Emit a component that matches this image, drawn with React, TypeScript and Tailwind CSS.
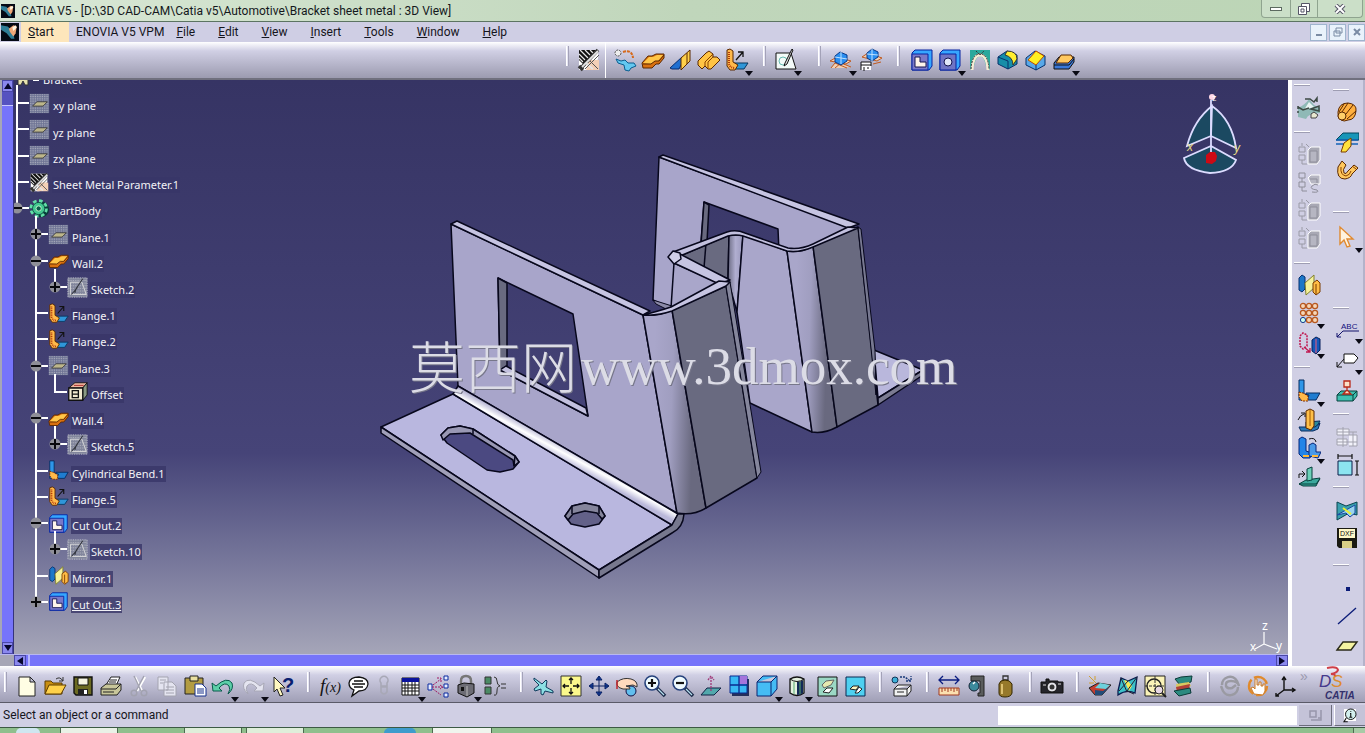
import type { ReactNode } from "react";

const icons: Record<string, ReactNode> = {
  // sheet metal tools
  params: (
    <>
      <path d="M2 2h19v9l-9 11H2z" fill="#fff" />
      <path d="M12 12h10v10H9z" fill="#f3cfb6" />
      <path d="M2 2h17l-9 10-4 4-4-4z" fill="#111" />
      <path d="M2 6l6 6M3 2l8 8M8 2l5 5M13 2l3 3M2 10l4 4" stroke="#e8e8e8" strokeWidth="1.2" />
      <path d="M21 2L4 20M2 18l4 4" stroke="#333" strokeWidth="3.5" />
      <path d="M21 3L5 19M9 15l7 6" stroke="#e4e4e4" strokeWidth="1.8" />
      <path d="M8 21L22 7M13 13l8 8" stroke="#555" />
    </>
  ),
  recognize: (
    <>
      <circle cx="5" cy="5" r="3" fill="#eee" stroke="#555" strokeDasharray="2 1" />
      <path d="M10 4q9-3 10 6" fill="none" stroke="#d66a1c" strokeWidth="2" strokeDasharray="3 1" />
      <path d="M3 11l5 2 4-1 3 3h6l2 3-5 2-2 3-4-1-1-5-6-2z" fill="#63c8f0" stroke="#0a5d90" />
    </>
  ),
  wall: (
    <>
      <path d="M1 15l6-7h4l4-2h8v4l-5 6h-3l-4 4H2z" fill="#d87010" stroke="#5b2800" />
      <path d="M2 15l6-6h4l4-2h6l-5 6h-3l-4 3z" fill="#ffc648" />
      <path d="M2 16h8l4-3h4l5-6" fill="none" stroke="#5b2800" />
    </>
  ),
  wallEdge: (
    <>
      <path d="M1 20L13 9v6l-3 6H3z" fill="#1f6fd0" stroke="#062c70" />
      <path d="M12 10l9-8v11l-9 9z" fill="#ffd04a" stroke="#5b2800" />
      <path d="M18 5v11" stroke="#5b2800" />
    </>
  ),
  extrusion: (
    <>
      <path d="M1 13l8-8 3-2 4 3v3h4l3 3-9 9h-3l-3-3-3 3-4-4z" fill="#ffc444" stroke="#5b2800" />
      <path d="M16 6l-8 8v4M16 9l-5 5v6" fill="none" stroke="#8a4000" />
    </>
  ),
  flange: (
    <>
      <path d="M9 15h14l-4 6H9z" fill="#2f96d8" stroke="#08365f" />
      <path d="M2 2l3-1 3 2v11l5 3-3 5H5l-3-4z" fill="#ffb94a" stroke="#5b2800" />
      <path d="M4 4v12q1 4 6 4" fill="none" stroke="#b0380c" strokeDasharray="1 1" strokeWidth="2" />
      <path d="M11 12l7-8M13 4h5v5" fill="none" stroke="#111" strokeWidth="1.3" />
    </>
  ),
  sketch: (
    <>
      <path d="M2 5h15l5 16H2z" fill="#f3faf8" stroke="#111" />
      <circle cx="9" cy="13" r="4" fill="none" stroke="#67bcb2" />
      <path d="M18 1L11 15l-1 3 3-2 6-14z" fill="#ddd" stroke="#111" />
    </>
  ),
  fold: (
    <>
      <path d="M1 13l7-4 14 4-5 3zM2 20l4-5 12 5M6 20l6-5 10 4" fill="#f1d0b4" stroke="#bf5a20" />
      <path d="M6 8l5-4 7 3v6l-6 4-6-3z" fill="#2b8ff0" stroke="#07398b" />
      <path d="M12 4v12M6 9l12 2" stroke="#bfe2ff" />
    </>
  ),
  foldMap: (
    <>
      <path d="M3 9l6-4 14 5-5 3zM14 16l8-2" fill="#f1d0b4" stroke="#bf5a20" />
      <path d="M8 5l5-4 6 3v5l-6 4-5-3z" fill="#2b8ff0" stroke="#07398b" />
      <path d="M13 1v12M8 6l11 1" stroke="#bfe2ff" />
      <path d="M2 14h10v8H2z" fill="#fff" />
      <path d="M2 22v-8h10v4M2 17h10M5 19v4M8 20h2" stroke="#111" />
    </>
  ),
  cutout: (
    <>
      <path d="M2 5l3-3h17v16l-3 4H2z" fill="#36a6ff" stroke="#0622a0" />
      <path d="M2 6h16v16H2z" fill="#7a78c8" stroke="#0622a0" />
      <path d="M5 9h5v5h6v5H5z" fill="#fff4ea" stroke="#141450" />
    </>
  ),
  hole: (
    <>
      <path d="M2 5l3-3h17v16l-3 4H2z" fill="#36a6ff" stroke="#0622a0" />
      <path d="M2 6h16v16H2z" fill="#6f74c4" stroke="#0622a0" />
      <circle cx="10" cy="14" r="4" fill="#dfe6f8" stroke="#141450" />
    </>
  ),
  corner: (
    <>
      <path d="M2 2h20v20l-4-4q-2-10-6-10T6 18l-4 4z" fill="#2aa89c" />
      <path d="M4 22q1-15 8-15t8 15" fill="none" stroke="#f6ecd4" strokeWidth="3" />
      <path d="M3 21q1-15 9-15t9 15M8 3l4 4 4-4" fill="none" stroke="#333" strokeDasharray="2 1" />
    </>
  ),
  cornerRelief: (
    <>
      <path d="M2 9l9-6 10 4v9l-9 5-10-5z" fill="#168ea8" stroke="#07306b" />
      <path d="M11 3q10 0 10 8l-4 6q0-8-8-10z" fill="#ffee30" stroke="#333" />
      <path d="M2 9l10 4v8" stroke="#07306b" />
    </>
  ),
  chamfer: (
    <>
      <path d="M2 10l9-7 10 5v9l-9 5-10-5z" fill="#58a8e8" stroke="#07306b" />
      <path d="M4 12l8-9 8 5-8 9z" fill="#fff020" stroke="#c04a00" />
      <path d="M12 17v5" stroke="#07306b" />
    </>
  ),
  stamp: (
    <>
      <path d="M2 15l5-6h15v5l-5 7H2z" fill="#3a78d8" stroke="#111" />
      <path d="M4 15l5-8h10l2 3-5 5z" fill="#ffc860" stroke="#5b2800" />
      <path d="M2 17h15l5-6" fill="none" stroke="#111" />
    </>
  ),
  // specification tree
  plane: (
    <>
      <path d="M1 1h22v22H1z" fill="#6e7394" />
      <path d="M1 2h22M1 4h22M1 6h22M1 8h22M1 10h22M1 12h22M1 14h22M1 16h22M1 18h22M1 20h22M1 22h22" stroke="#b5b8c4" strokeDasharray="1 1" />
      <path d="M4 15l5-5h12l-5 5z" fill="#bcb68a" stroke="#34343c" />
    </>
  ),
  treeSketch: (
    <>
      <path d="M1 1h22v22H1z" fill="#82869c" stroke="#d0d2da" strokeDasharray="1 1" />
      <path d="M1 4h22M1 7h22M1 10h22M1 13h22M1 16h22M1 19h22" stroke="#b9bcc6" strokeDasharray="1 1" />
      <path d="M4 6h13l5 14H4z" fill="none" stroke="#ddd" />
      <path d="M18 2l-8 12-1 4M5 20l7-8" stroke="#33363f" strokeWidth="1.3" />
    </>
  ),
  gear: (
    <>
      <circle cx="14" cy="13" r="9" fill="#083f3c" />
      <circle cx="11" cy="12" r="8.5" fill="none" stroke="#63dfa8" strokeWidth="4" strokeDasharray="4 2.7" />
      <circle cx="11" cy="12" r="7" fill="#42c890" stroke="#0a4d40" />
      <circle cx="11" cy="12" r="3" fill="#0e5b4c" stroke="#c8ffd0" />
    </>
  ),
  offset: (
    <>
      <path d="M2 8l7-6h14l-5 6z" fill="#f0b8a0" stroke="#111" />
      <path d="M18 8l5-6v14l-5 6z" fill="#8a9a84" stroke="#111" />
      <path d="M2 8h16v14H2z" fill="#f2ead0" stroke="#111" strokeWidth="1.5" />
      <path d="M6 11h7v8H6zM6 15h7" fill="none" stroke="#111" strokeWidth="1.5" />
      <path d="M8 5h11" stroke="#a02020" />
    </>
  ),
  bend: (
    <>
      <path d="M9 14h14l-4 7H9z" fill="#1f7cd0" stroke="#062c60" />
      <path d="M2 1h5v14l5 1-2 5H2z" fill="#2f96e8" stroke="#062c60" />
      <path d="M2 13l4 1 5 3v5H5l-3-4z" fill="#ffb94a" stroke="#7a2800" strokeDasharray="2 1" />
    </>
  ),
  mirror: (
    <>
      <path d="M2 5l3-3 3 2v12l-3 3-3-2z" fill="#1c78c8" stroke="#063070" />
      <path d="M8 10l9-8v13l-8 7z" fill="#f6f29a" stroke="#80802c" />
      <path d="M16 10l4-3 3 3v9l-4 3-3-3zM19 11v10" fill="#ffbd45" stroke="#7a3c00" />
    </>
  ),
  // right columns
  workbench: (
    <>
      <path d="M1 12q7-3 11-9l5 6 6 3v5q-12 0-14 6l-8-2z" fill="#8fb9b6" />
      <path d="M12 6l5 5-10 3z" fill="#e8f4f2" />
      <path d="M1 11l5 3 6-2M14 13l8-3v5zM8 3h5l4 3 3-4v4M1 13v-3M1 15v2" fill="none" stroke="#3d4a44" strokeWidth="1.5" />
      <path d="M14 18l3-2 4 3-2 3h-5z" fill="#e8e8d0" stroke="#444" />
    </>
  ),
  ghost: (
    <>
      <path d="M11 8l3-3h9v13l-3 4h-9z" fill="#a8a8b4" stroke="#fff" />
      <path d="M2 5h6v5H2zM2 13h6v5H2zM5 1v3M5 18v4h5M9 2l3 3" fill="none" stroke="#9a9aa6" />
      <path d="M13 9h7v11h-7z" fill="#b6b6c2" stroke="#8e8e9a" />
    </>
  ),
  ghostLoop: (
    <>
      <path d="M11 8l3-3h9v9h-9z" fill="#b6b6c2" stroke="#fff" />
      <path d="M2 3h6v5H2zM2 12h6v5H2zM5 8v4M5 17v4h5M13 9h7v4M21 15q-3-2-6 1t5 4q3 3-5 2" fill="none" stroke="#8e8e9a" />
    </>
  ),
  rolled: (
    <>
      <path d="M3 12q1-9 10-9 9 1 8 8-1 9-8 9-4 2-7 0-4-3-3-8z" fill="#ffb040" stroke="#5b2800" />
      <circle cx="7" cy="16" r="4" fill="#ffcf6a" stroke="#5b2800" />
      <path d="M7 12L13 3M11 14l7-9M4 12l5-8M12 19l9-8" stroke="#5b2800" />
    </>
  ),
  hopper: (
    <>
      <path d="M8 3h16v7H13L1 10z" fill="#1796b8" stroke="#05455c" />
      <path d="M1 10h22M1 14h22" stroke="#1464b8" strokeWidth="1.6" />
      <path d="M9 13l7-5v8l-5 6H6z" fill="#ffe23c" stroke="#7a3c00" />
    </>
  ),
  swept: (
    <>
      <path d="M3 9q-2 12 7 12 6-1 7-5l6-6-4-3-6 6q-2 4-4 2-2-3 2-8L7 3z" fill="#ffc85e" stroke="#5b2800" />
      <path d="M6 9q-1 8 5 9 4-1 5-5M17 8l4 3" stroke="#8a4000" />
    </>
  ),
  select: <path d="M5 2v17l4-4 3 7 3-1-3-7h6z" fill="#fff3df" stroke="#e08a30" strokeWidth="1.4" />,
  pattern: (
    <>
      <g fill="#f5d6b8" stroke="#b85820" strokeWidth="1.3">
        <circle cx="6" cy="5" r="2.6" /><circle cx="12" cy="5" r="2.6" /><circle cx="18" cy="5" r="2.6" />
        <circle cx="6" cy="12" r="2.6" /><circle cx="12" cy="12" r="2.6" /><circle cx="18" cy="12" r="2.6" />
        <circle cx="12" cy="19" r="2.6" /><circle cx="18" cy="19" r="2.6" />
      </g>
      <circle cx="6" cy="19" r="2.6" fill="#cfe" stroke="#14388c" />
    </>
  ),
  translate: (
    <>
      <path d="M3 5l3-3 4 2v11l-4 3-3-3z" fill="none" stroke="#c01850" strokeWidth="1.5" strokeDasharray="2 1" />
      <path d="M7 16l6 5M13 17v4H9" fill="none" stroke="#c01850" strokeWidth="1.3" />
      <path d="M15 9l4-3 4 2v11l-4 4-4-3z" fill="#1458b8" stroke="#07205c" />
      <path d="M19 8v14" stroke="#ef5a7a" />
    </>
  ),
  unfoldBend: (
    <>
      <path d="M9 14l14-1-4 7H9z" fill="#2b8a9c" stroke="#062c60" />
      <path d="M2 19h16l5-4-2 6-5 2H4z" fill="#2b7ab8" stroke="#062c60" />
      <path d="M9 20V3l4-2 4 2v15l-3 4z" fill="#ffc04a" stroke="#5b2800" />
      <path d="M13 2v16" stroke="#a05a00" />
      <path d="M1 12q2-5 6-6M4 5h4v4" fill="none" stroke="#111" />
    </>
  ),
  foldAll: (
    <>
      <path d="M2 3l3-2 4 2v12l6 2-2 5H6l-4-4z" fill="#2384e8" stroke="#06267a" />
      <path d="M12 20V9l4-2 3 2v7h5l-3 6z" fill="#4a9ae8" stroke="#06267a" />
      <path d="M6 20h6M15 20h6" stroke="#ffb838" strokeWidth="2" />
      <path d="M12 3q6-2 7 3" fill="none" stroke="#111" />
    </>
  ),
  pointMap: (
    <>
      <path d="M9 14l14-2-4 8H6l-4-2z" fill="#3ba89c" stroke="#06403c" />
      <path d="M10 15V3l5-2v13z" fill="#6cd0b8" stroke="#06403c" />
      <path d="M2 18h17l4-5" fill="none" stroke="#06403c" />
      <path d="M2 12V8h5M5 5l3 3-3 3" fill="none" stroke="#111" />
    </>
  ),
  annotation: (
    <>
      <text x="6" y="13" fontSize="8" fontFamily="Liberation Sans, sans-serif" fill="#10107c">ABC</text>
      <path d="M24 15H8l-6 6M2 17v4h4" fill="none" stroke="#10106a" />
    </>
  ),
  flag: (
    <>
      <path d="M9 7h10l4 4-4 5H9z" fill="#fff" stroke="#111" />
      <path d="M9 12L2 20M2 15v5h5" fill="none" stroke="#111" />
    </>
  ),
  datum: (
    <>
      <path d="M2 16l4-4h16v5l-4 5H2z" fill="#3fc0b0" stroke="#06403c" />
      <path d="M2 16h16l4-4M18 16v6" fill="none" stroke="#06403c" />
      <path d="M9 2h6v6H9zM12 8v4M8 15l4-4 4 4z" fill="#fbe0c8" stroke="#b82818" strokeWidth="1.3" />
    </>
  ),
  ghostTable: <path d="M2 4h12v6H2zM2 7h20M8 2v20M2 14h10v6H2zM14 10h8v11h-8M18 7v14M2 17h20" fill="#f2f2fa" stroke="#a2a2ae" />,
  dimension: (
    <>
      <path d="M3 8h14v14H3z" fill="#8ce4f0" stroke="#0b1c48" />
      <path d="M3 3h14M3 1v5M17 1v5M22 8v14M20 8h4M20 22h4" stroke="#111" strokeWidth="1.2" />
    </>
  ),
  intersection: (
    <>
      <path d="M2 4l9 4 11-4v13l-8-2-12 7z" fill="#3aa0ae" stroke="#0a4450" />
      <path d="M2 17L20 7v8l-5 4-4-4z" fill="#9ad4ef" stroke="#1848a0" />
      <path d="M8 10l8 6" stroke="#e8f030" strokeWidth="2" />
    </>
  ),
  dxf: (
    <>
      <path d="M2 2h20v20H4l-2-2z" fill="#1a1a12" />
      <path d="M4 3h16v9H4z" fill="#fff8c8" />
      <text x="5" y="10" fontSize="7" fontFamily="Liberation Sans, sans-serif" fill="#111">DXF</text>
      <path d="M7 15h10v7H7z" fill="#d9cf86" />
    </>
  ),
  point: <path d="M11 11h4v4h-4z" fill="#0b1c78" />,
  line: <path d="M3 20L21 4" stroke="#0b1c78" strokeWidth="1.4" />,
  yellowPlane: <path d="M2 16l6-8h14l-6 8z" fill="#f4f3a0" stroke="#2a2a18" strokeWidth="1.4" />,
  // bottom toolbar
  newDoc: <path d="M4 3h11l5 5v14H4zM15 3v5h5" fill="#fffde4" stroke="#222" />,
  open: (
    <>
      <path d="M2 20V7h6l2 2h9v11z" fill="#c98f12" stroke="#5c3c00" />
      <path d="M2 20l4-9h17l-5 9z" fill="#ffd14a" stroke="#5c3c00" />
      <path d="M13 5q4-3 7 2M20 3v4h-4" fill="none" stroke="#333" />
    </>
  ),
  save: (
    <>
      <path d="M3 3h18v18H5l-2-2z" fill="#6b6a22" stroke="#111" strokeWidth="1.4" />
      <path d="M7 4h10v7H7z" fill="#f4f4e0" stroke="#111" />
      <path d="M7 15h10v6H7z" fill="#222" /><path d="M13 16h3v4h-3z" fill="#fff" />
    </>
  ),
  print: (
    <>
      <path d="M7 11l5-8h9l-4 9z" fill="#fff" stroke="#222" />
      <path d="M2 14l5-4h15v6l-4 5H2z" fill="#c8c69a" stroke="#222" />
      <path d="M2 15h15l5-5M4 18h11M11 6h7M10 8h7" fill="none" stroke="#222" />
    </>
  ),
  cut: (
    <>
      <path d="M8 3l7 14M18 3l-8 14" stroke="#fff" strokeWidth="2.5" />
      <path d="M7 2l7 15M17 2L9 17" stroke="#a2a2b0" strokeWidth="1.5" />
      <circle cx="7" cy="19" r="2.8" stroke="#a2a2b0" strokeWidth="1.5" />
      <circle cx="17" cy="19" r="2.8" stroke="#a2a2b0" strokeWidth="1.5" />
    </>
  ),
  copy: <path d="M3 3h10v13H3zM9 8h8l4 4v10H9zM11 13h8M11 16h8M11 19h8M5 6h6M5 9h3" fill="#e4e4f0" stroke="#a4a4b0" />,
  paste: (
    <>
      <path d="M2 4h18v16H2z" fill="#b39c42" stroke="#222" />
      <path d="M7 2h8v5H7z" fill="#e9dfa0" stroke="#222" />
      <path d="M12 10h7l4 4v8H12z" fill="#fff" stroke="#16308c" />
      <path d="M14 15h7M14 17h7M14 19h7" stroke="#16308c" />
    </>
  ),
  undo: <path d="M1 9l1 8h9l-3-3q6-7 10-2 2 3-1 8 6-5 4-11-5-7-16 3z" fill="#5ccfa8" stroke="#0a5a4c" />,
  redo: <path d="M23 9l-1 8h-9l3-3q-6-7-10-2-2 3 1 8-6-5-4-11 5-7 16 3z" fill="#e4e4f0" stroke="#a8a8b6" />,
  whatsThis: (
    <>
      <path d="M3 3v15l3-3 3 7 3-1-3-7h5z" fill="#fff8c0" stroke="#222" />
      <text x="11" y="18" fontSize="20" fontWeight="bold" fontFamily="Liberation Sans, sans-serif" fill="#0a2070">?</text>
    </>
  ),
  formula: (
    <text x="2" y="18" fontSize="19" fontStyle="italic" fontFamily="Liberation Serif, serif" fill="#111">
      f<tspan fontSize="14">(x)</tspan>
    </text>
  ),
  comment: <path d="M3 9q1-6 10-6 9 1 9 7-1 7-9 7l-7 5 2-6q-5-2-5-7zM8 7h9M6 10h13M8 13h9" fill="#fff" stroke="#111" strokeWidth="1.3" />,
  ghostLock: <path d="M9 9a4 4 0 1 1 6 0v3H9zM9 13h6v5q-3 4-6 0z" fill="none" stroke="#a8a8b6" strokeWidth="1.6" />,
  table: (
    <>
      <path d="M4 4h17v17H4z" fill="#fff" stroke="#111" />
      <path d="M4 4h17v4H4z" fill="#0a129c" />
      <path d="M4 11h17M4 14h17M4 17h17M7 8v13M10 8v13M14 8v13M17 8v13" stroke="#111" />
    </>
  ),
  relations: (
    <>
      <path d="M2 10h4v6H2zM18 2h4v4h-4zM18 10h4v4h-4zM18 19h4v4h-4z" fill="#e6ecff" stroke="#0a2aa0" />
      <path d="M6 13h10M7 11l8-6M11 4h4v4M14 11l3 2-3 2M7 15l8 6" stroke="#a01860" strokeDasharray="2 1" />
    </>
  ),
  lock: (
    <>
      <path d="M7 11V7q0-5 5-5t5 5v4" fill="none" stroke="#777" strokeWidth="2.5" />
      <path d="M4 11l6-2 10 1v9l-7 4-9-4z" fill="#6c6c74" stroke="#111" />
      <path d="M13 12v10" stroke="#bbb" /><path d="M7 13h3v4H7z" fill="#111" />
    </>
  ),
  equivalent: (
    <>
      <path d="M3 3h6v7H3zM3 13h6v7H3z" fill="#4a8a64" stroke="#333" />
      <path d="M12 3q3 0 3 4t3 5q-3 0-3 5t-3 4M19 10h5M19 14h5" fill="none" stroke="#333" />
    </>
  ),
  fly: <path d="M3 4l8 6 4-4 1 1-1 6 7 4v2l-8-2-2 4-2-1v-5l-6 2-1-2 5-4-5-5z" fill="#8ce0e4" stroke="#103a5c" />,
  fitAll: (
    <>
      <path d="M2 2h20v20H2z" fill="#fbf88c" stroke="#333" />
      <path d="M12 4v6M10 6l2-2 2 2M12 20v-6M10 18l2 2 2-2M4 12h6M6 10l-2 2 2 2M20 12h-6M18 10l2 2-2 2" fill="none" stroke="#111" strokeWidth="1.3" />
    </>
  ),
  pan: <path d="M12 3v18M3 12h18M9 6l3-4 3 4zM9 18l3 4 3-4zM6 9l-4 3 4 3zM18 9l4 3-4 3z" fill="#1444b0" stroke="#0a2060" />,
  rotate: (
    <>
      <circle cx="16" cy="17" r="5" fill="#62bfee" stroke="#114" />
      <path d="M2 8q6-5 14-3 7 2 6 8l-4-2-7 1q5 1 4 3H8q-5-1-6-4z" fill="#ffd9bd" stroke="#333" />
      <path d="M2 6v9" stroke="#c0242c" strokeWidth="1.5" />
    </>
  ),
  zoomIn: (
    <>
      <path d="M14 14l8 8" stroke="#1b2a48" strokeWidth="3.5" /><path d="M15 15l6 6" stroke="#b8e0f0" strokeWidth="1.3" />
      <circle cx="9" cy="9" r="7" fill="#eefafe" stroke="#26427c" strokeWidth="1.6" /><path d="M5 9h8M9 5v8" stroke="#111" strokeWidth="2.2" />
    </>
  ),
  zoomOut: (
    <>
      <path d="M14 14l8 8" stroke="#1b2a48" strokeWidth="3.5" /><path d="M15 15l6 6" stroke="#b8e0f0" strokeWidth="1.3" />
      <circle cx="9" cy="9" r="7" fill="#eefafe" stroke="#26427c" strokeWidth="1.6" /><path d="M5 9h8" stroke="#111" strokeWidth="2.2" />
    </>
  ),
  normal: (
    <>
      <path d="M2 21l6-7h14l-7 7z" fill="#52a8ac" stroke="#124" />
      <path d="M12 17V4M9 6l3-4 3 4" fill="none" stroke="#a03878" strokeDasharray="2 1" strokeWidth="1.3" />
    </>
  ),
  multiView: (
    <>
      <path d="M5 5h17v17H5z" fill="#26305c" />
      <path d="M3 2h17v17H3z" fill="#38b8f4" stroke="#0a2a90" />
      <path d="M12 2h8v8h-8z" fill="#a474dc" /><path d="M12 2v17M3 11h17" stroke="#0a2a90" strokeWidth="1.3" />
    </>
  ),
  isoView: <path d="M2 8l6-6h14v13l-6 7H2zM2 8h14l6-6M16 8v14" fill="#45bcf4" stroke="#0a2470" />,
  shading: (
    <>
      <path d="M5 5v14q7 5 14 0V5q-7-4-14 0z" fill="#e4f0e0" stroke="#111" strokeWidth="1.3" />
      <path d="M12 8q4 0 6-2v13q-2 2-6 2z" fill="#142a58" />
      <path d="M5 5q7 5 14 0" fill="none" stroke="#111" /><path d="M9 8v12M15 8v12" stroke="#58ac70" />
    </>
  ),
  hideShow: (
    <>
      <path d="M3 3h19v19H3z" fill="#9bd8c4" stroke="#111" />
      <path d="M7 11l4-4 8-1-3 5-7 3z" fill="#e6e9b0" stroke="#666" /><path d="M8 18l4-4h6l-4 5z" fill="#fff" stroke="#222" />
    </>
  ),
  swapSpace: (
    <>
      <path d="M3 3h19v19H3z" fill="#4fd0f0" stroke="#0b2850" />
      <path d="M7 15l3-3h6l-3 4z" fill="#fdf8c0" stroke="#222" /><path d="M12 19l4-6 3 2-4 4z" fill="#fff" stroke="#222" />
    </>
  ),
  catalog: (
    <>
      <circle cx="5" cy="6" r="3" fill="#3fb0d8" stroke="#135" />
      <path d="M10 3h5l5 4M16 7h5V2" fill="none" stroke="#183878" strokeDasharray="2 1" strokeWidth="1.3" />
      <path d="M4 15l4-4h13v6l-4 5H4zM4 15h13l4-4M17 15v7M7 18h7" fill="#f2f2f2" stroke="#222" />
    </>
  ),
  measure: (
    <>
      <path d="M2 6h20M6 2L2 6l4 4M18 2l4 4-4 4" fill="none" stroke="#0a1c80" strokeWidth="1.3" />
      <path d="M2 14h20v7H2z" fill="#fbe0b0" stroke="#a03820" /><path d="M5 14v4M8 14v3M11 14v4M14 14v3M17 14v4M20 14v3" stroke="#a03820" />
    </>
  ),
  caliper: (
    <>
      <path d="M6 2h13v20h-6v-3h2V7H6z" fill="#5a5c5c" stroke="#222" />
      <circle cx="9" cy="12" r="5" fill="#3c8a9c" stroke="#123" /><path d="M8 10l2-2" stroke="#fff" strokeWidth="1.5" />
    </>
  ),
  inertia: (
    <>
      <path d="M10 2h5v4h-5z" fill="none" stroke="#333" strokeWidth="1.3" />
      <path d="M6 10q1-4 6-4t7 4v9q-1 4-7 4t-6-4z" fill="#96792a" stroke="#332600" /><path d="M9 10v10" stroke="#dcc070" strokeWidth="2" />
    </>
  ),
  camera: (
    <>
      <path d="M1 8h5V5h3v2h9v1h5v11H1z" fill="#25252b" stroke="#111" />
      <circle cx="12" cy="13" r="5" fill="#e4e4ea" stroke="#111" /><circle cx="12" cy="13" r="2.5" fill="#333" /><path d="M3 11h3M18 10h3" stroke="#ddd" />
    </>
  ),
  material: (
    <>
      <path d="M2 14l9-5 13 2-9 10H8z" fill="#c43c30" stroke="#222" />
      <path d="M8 14l5-5 10 2-4 4z" fill="#6cd0dc" /><path d="M8 16l8 1 7-5-8 9H8z" fill="#224c78" />
      <path d="M2 2l7 7M2 9h5M8 2v4" stroke="#d0a030" />
    </>
  ),
  texture: (
    <>
      <path d="M3 17l3-13 7 3 9-4-2 16q-8-4-17 2z" fill="#3cc0c8" stroke="#0a1c50" strokeWidth="1.3" />
      <path d="M9 6l4 1 4 5-3 5z" fill="#f4e858" />
      <path d="M6 4l6 14M13 7L4 17M22 3L12 17l7 3" fill="none" stroke="#223" />
    </>
  ),
  draft: (
    <>
      <path d="M2 2h20v20H2z" fill="#fbf3b8" stroke="#222" />
      <circle cx="11" cy="12" r="7" fill="none" stroke="#222" strokeWidth="1.4" /><path d="M2 12h20M12 2v20" stroke="#333" strokeDasharray="3 1" />
      <circle cx="16" cy="16" r="4" fill="#e8d8e4" stroke="#222" /><path d="M19 19l4 4" stroke="#222" strokeWidth="2" />
    </>
  ),
  layers: (
    <>
      <path d="M4 5l6-2 11-1-1 6-11 3z" fill="#2c8a80" stroke="#0b3a38" />
      <path d="M5 10l13-2 2 4-14 4z" fill="#d8c860" /><path d="M5 13l14-3-1 5-12 3z" fill="#b04038" /><path d="M3 17l16-3 1 5-12 3z" fill="#2c8a80" stroke="#0b3a38" />
    </>
  ),
  update: <path d="M4 11a8 8 0 0 1 15-4l2 5q-1-5-8-5-6 0-5 5 1 3 6 2l4-3M20 13a8 8 0 0 1-15 4l-2-5" fill="none" stroke="#9a9aa2" strokeWidth="2.5" />,
  manual: (
    <>
      <circle cx="12" cy="12" r="9" fill="none" stroke="#e08a2c" strokeWidth="2.5" strokeDasharray="16 3" />
      <path d="M8 20l-3-6 2-1 2 2V5h2v6h2V8h2v4h2v-2h2v7l-2 4z" fill="#fff" stroke="#d07a20" />
    </>
  ),
  axis: <path d="M10 3v13M10 16h11M10 16l-8 6M8 6l2-3 2 3M18 14l3 2-3 2M2 19v3h3" fill="none" stroke="#111" strokeWidth="1.4" />,
  info: (
    <>
      <path d="M4 4h16v16H4z" fill="#fff" />
      <circle cx="13" cy="11" r="7" fill="#d4f0ee" stroke="#111" strokeWidth="1.3" /><path d="M13 7v1M12 10h1v5M11 15h4M7 16l-3 5h5" fill="none" stroke="#111" strokeWidth="1.5" />
    </>
  ),
};

function Icon({ name, className = "size-6" }: { name: string; className?: string }) {
  return (
    <svg viewBox="0 0 24 24" fill="none" className={`shrink-0 ${className}`} aria-hidden="true">
      {icons[name]}
    </svg>
  );
}

interface ToolProps {
  name: string;
  label: string;
  menu?: boolean;
  className?: string;
}

function Tool({ name, label, menu, className = "" }: ToolProps) {
  return (
    <button type="button" aria-label={label} className={`relative flex h-7 w-7 shrink-0 items-center justify-center ${className}`}>
      <Icon name={name} />
      {menu && (
        <svg viewBox="0 0 8 5" className="absolute -right-0.5 -bottom-0.5 h-[5px] w-2">
          <path d="M0 0h8L4 5z" fill="#0a0a14" />
        </svg>
      )}
    </button>
  );
}

function Divider({ className = "" }: { className?: string }) {
  return <span className={`h-5 w-[3px] shrink-0 self-start border-x border-l-white border-r-[#a3a2b8] bg-[#e6e5f3] ${className}`} />;
}

function HDivider({ className = "" }: { className?: string }) {
  return <span className={`h-0.5 w-4 shrink-0 self-start border-b border-[#9e9db2] bg-white ${className}`} />;
}

const menus = ["File", "Edit", "View", "Insert", "Tools", "Window", "Help"];

function Galaxy({ className }: { className: string }) {
  return (
    <svg viewBox="0 0 16 16" className={className} aria-hidden="true">
      <path d="M0 0h16v16H0z" fill="#050a14" />
      <path d="M0 2l6 1 4 4 2 7H9L5 9 0 6z" fill="#2f7d96" />
      <path d="M7 5l4-3 3 1-1 6-2 3-3-4z" fill="#f0a878" />
      <path d="M10 4l3-2 1 2-3 3z" fill="#fff6e0" />
    </svg>
  );
}

function TitleBar() {
  return (
    <header className="flex h-[22px] shrink-0 items-center border-b border-[#5c7462] bg-linear-to-r from-[#d9e8d6] via-[#c0d6bb] to-[#bcd5b6] pl-px">
      <Galaxy className="size-[14px]" />
      <h1 className="ml-1.5 font-[Roboto,sans-serif] text-[12px] text-[#14181c]">
        CATIA V5 - [D:\3D CAD-CAM\Catia v5\Automotive\Bracket sheet metal : 3D View]
      </h1>
      <div className="mr-0.5 ml-auto flex h-[18px] self-start rounded-b border border-t-0 border-[#8fa48f] bg-[#cbdfc8]">
        <button type="button" aria-label="Minimize" className="flex w-7 items-center justify-center">
          <span className="h-1 w-3 border border-[#5c6a60] bg-white" />
        </button>
        <button type="button" aria-label="Restore" className="flex w-7 items-center justify-center border-x border-[#8fa48f]">
          <svg viewBox="0 0 12 12" className="size-3">
            <path d="M3.5.5h8v8h-8z" fill="#fff" stroke="#556" />
            <path d="M.5 3.5h8v8h-8zM3 6h3v3H3z" fill="#fff" stroke="#556" />
          </svg>
        </button>
        <button type="button" aria-label="Close" className="flex w-11 items-center justify-center">
          <svg viewBox="0 0 12 10" className="h-2.5 w-3">
            <path d="M2 1l8 8M10 1L2 9" stroke="#556" strokeWidth="4" />
            <path d="M2 1l8 8M10 1L2 9" stroke="#fff" strokeWidth="2" />
          </svg>
        </button>
      </div>
    </header>
  );
}

function MenuBar() {
  return (
    <nav className="flex h-5 shrink-0 items-center bg-[#cfcee4] pl-px font-[Roboto,sans-serif] text-[12px] text-[#15151c]">
      <Galaxy className="size-[18px]" />
      <button type="button" className="ml-0.5 h-full w-12 bg-[#fde6bb] pr-2"><u>S</u>tart</button>
      <button type="button" className="pr-3 pl-[7px]">ENOVIA V5 VPM</button>
      {menus.map((menu) => (
        <button key={menu} type="button" className="mr-[23px]">
          <u>{menu[0]}</u>{menu.slice(1)}
        </button>
      ))}
      <div className="ml-auto flex gap-0.5">
        <button type="button" aria-label="Minimize document" className="flex h-[17px] w-[17px] items-end justify-center border border-[#9fb4ce] bg-[#e9f2fb] pb-1">
          <span className="h-0.5 w-1.5 bg-[#7a8ba4]" />
        </button>
        <button type="button" aria-label="Restore document" className="flex h-[17px] w-[17px] items-center justify-center border border-[#9fb4ce] bg-[#e9f2fb]">
          <svg viewBox="0 0 10 10" className="size-2.5"><path d="M3 1h6v5H3zM1 4h6v5H1z" fill="#e9f2fb" stroke="#7a8ba4" /></svg>
        </button>
        <button type="button" aria-label="Close document" className="flex h-[17px] w-[17px] items-center justify-center border border-[#9fb4ce] bg-[#e9f2fb]">
          <svg viewBox="0 0 10 10" className="size-2.5"><path d="M2 2l6 6M8 2L2 8" stroke="#7a8ba4" strokeWidth="2" /></svg>
        </button>
      </div>
    </nav>
  );
}

function TopToolbar() {
  return (
    <div className="flex h-[38px] shrink-0 items-center border-b-2 border-[#70707e] bg-linear-to-b from-white via-[#d0cfe4] via-25% to-[#9c9bb0] pl-[566px]">
      <Divider className="mt-1" />
      <Tool name="params" label="Sheet Metal Parameters" className="ml-1.5" />
      <span className="ml-0.5 h-full w-px bg-white" />
      <Tool name="recognize" label="Recognize" className="ml-[5px]" />
      <Tool name="wall" label="Wall" />
      <Tool name="wallEdge" label="Wall On Edge" />
      <Tool name="extrusion" label="Extrusion" />
      <Tool name="flange" label="Flange" menu />
      <Divider className="mt-1 ml-3" />
      <Tool name="sketch" label="Sketch" menu className="ml-1.5" />
      <Divider className="mt-1 ml-[18px]" />
      <Tool name="fold" label="Fold/Unfold" menu className="ml-1.5" />
      <Tool name="foldMap" label="Multi Viewer" className="ml-0.5" />
      <Divider className="mt-1 ml-3" />
      <Tool name="cutout" label="Cut Out" className="ml-2" />
      <Tool name="hole" label="Hole" menu />
      <Tool name="corner" label="Corner Relief" className="ml-0.5" />
      <Tool name="cornerRelief" label="Corner" />
      <Tool name="chamfer" label="Chamfer" />
      <Tool name="stamp" label="Stamp" menu />
    </div>
  );
}

interface TreeItem {
  icon: string;
  label: string;
  level: 1 | 2 | 3;
  node?: "+" | "-";
  end?: boolean;
  active?: boolean;
}

const tree: TreeItem[] = [
  { icon: "plane", label: "xy plane", level: 1 },
  { icon: "plane", label: "yz plane", level: 1 },
  { icon: "plane", label: "zx plane", level: 1 },
  { icon: "params", label: "Sheet Metal Parameter.1", level: 1 },
  { icon: "gear", label: "PartBody", level: 1, node: "-", end: true },
  { icon: "plane", label: "Plane.1", level: 2, node: "+" },
  { icon: "wall", label: "Wall.2", level: 2, node: "-" },
  { icon: "treeSketch", label: "Sketch.2", level: 3, node: "+", end: true },
  { icon: "flange", label: "Flange.1", level: 2 },
  { icon: "flange", label: "Flange.2", level: 2 },
  { icon: "plane", label: "Plane.3", level: 2, node: "-" },
  { icon: "offset", label: "Offset", level: 3, end: true },
  { icon: "wall", label: "Wall.4", level: 2, node: "-" },
  { icon: "treeSketch", label: "Sketch.5", level: 3, node: "+", end: true },
  { icon: "bend", label: "Cylindrical Bend.1", level: 2 },
  { icon: "flange", label: "Flange.5", level: 2 },
  { icon: "cutout", label: "Cut Out.2", level: 2, node: "-" },
  { icon: "treeSketch", label: "Sketch.10", level: 3, node: "+", end: true },
  { icon: "mirror", label: "Mirror.1", level: 2 },
  { icon: "cutout", label: "Cut Out.3", level: 2, node: "+", end: true, active: true },
];

// One column of the tree's connecting lines
function Rail({ branch, end, node }: { branch?: boolean; end?: boolean; node?: "+" | "-" }) {
  return (
    <span className="relative w-[19px] shrink-0 self-stretch">
      <span className={`absolute -top-2 left-2 w-0.5 bg-white ${end ? "bottom-4" : "bottom-0"}`} />
      {branch && <span className="absolute top-[9px] -right-0.5 left-2 h-0.5 bg-white" />}
      {node && (
        <svg viewBox="0 0 12 12" className="absolute top-1 left-[3px] size-3">
          <circle cx="6" cy="6" r="5.5" fill="#8f8f98" />
          <path d={node === "+" ? "M1 6h10M6 1v10" : "M1 6h10"} stroke="#08080c" strokeWidth="2" />
        </svg>
      )}
    </span>
  );
}

function SpecTree() {
  return (
    <ul className="relative -mt-[13px] ml-[-6px] grid h-[551px] w-52 auto-rows-fr font-['Noto_Sans',sans-serif] text-[11px] text-[#f2f2f6]">
      <li className="flex items-center pl-[9px]">
        <svg viewBox="0 0 12 12" className="size-3"><path d="M1 3h10v8H8L6 7l-2 4H1z" fill="#e8e2b0" stroke="#333" /></svg>
        <span className="ml-1 h-0.5 w-1.5 bg-white" />
        <span className="ml-1">Bracket</span>
      </li>
      {tree.map((item) => (
        <li key={item.label} className="flex items-center">
          {item.level === 1 && <Rail branch end={item.end} node={item.node} />}
          {item.level > 1 && <span className="w-[19px] shrink-0" />}
          {item.level === 2 && <Rail branch end={item.end} node={item.node} />}
          {item.level === 3 && <Rail />}
          {item.level === 3 && <Rail branch end={item.end} node={item.node} />}
          <span className="relative ml-0.5 pb-1.5"><Icon name={item.icon} className="size-[21px]" /></span>
          <span className={`ml-0.5 h-4 bg-[#383668]/80 px-px leading-4 ${item.active ? "underline" : ""}`}>
            {item.label}
          </span>
        </li>
      ))}
    </ul>
  );
}

function Bracket() {
  return (
    <svg viewBox="14 80 1274 574" preserveAspectRatio="xMidYMid meet" className="absolute inset-0 size-full" role="img" aria-label="Sheet metal bracket">
      <defs>
        <linearGradient id="bend" x1="0" x2="1" y1="0" y2="0.12">
          <stop offset="0.2" stopColor="#a9a6ca" />
          <stop offset="0.5" stopColor="#a09ec0" />
          <stop offset="0.85" stopColor="#69697f" />
        </linearGradient>
        <linearGradient id="fold" gradientUnits="userSpaceOnUse" x1="568" y1="447" x2="561" y2="460">
          <stop offset="0" stopColor="#b4b2d2" />
          <stop offset="0.5" stopColor="#ffffff" />
          <stop offset="1" stopColor="#bab8da" />
        </linearGradient>
        <linearGradient id="innerBend" x1="0" x2="1" y1="0" y2="0">
          <stop offset="0" stopColor="#6c6c84" />
          <stop offset="0.5" stopColor="#b0aed0" />
          <stop offset="1" stopColor="#9a98bc" />
        </linearGradient>
      </defs>
      <g stroke="#07071c" strokeWidth="1.5" strokeLinejoin="round">
        {/* rear base tab */}
        <path d="M874 350L923 370L878 398z" fill="#b9b7dc" />
        <path d="M923 370v5L878 405v-7z" fill="#7b7b92" />
        {/* rear wall with its window */}
        <path fillRule="evenodd" d="M659 157L848 227L858 228V300H700L667 307L653 300zM704 202L701 242L709 252L779 252L778 229z" fill="#a8a5ca" />
        <path d="M659 157L663 155L859 224L848 228z" fill="#c6c4e2" />
        <path d="M704 202L709 205L707 242L701 244z" fill="#696a80" />
        <path d="M653 300L672 306L668 310L656 304z" fill="#8c8aa8" strokeWidth="1" />
        {/* rear channel */}
        <path d="M680 256L729 235L728 279z" fill="#696a80" />
        <path d="M706 243L704 268" />
        <path d="M729 235H743L737 312L728 280z" fill="url(#innerBend)" />
        <path d="M743 234L787 251L812 432L750 403L737 312z" fill="#a9a6ca" />
        <path d="M787 251Q801 253 813 246L837 427Q824 434 812 432z" fill="url(#bend)" />
        <path d="M813 246L858 227L878 405L837 427z" fill="#696a80" />
        <path d="M858 227L861 229L875 350L876 395z" fill="#777890" strokeWidth="1" />
        <path d="M673 252L727 232Q736 229 745 233L788 248Q800 250 813 244L848 227L858 228L813 247Q799 253 787 251L743 236Q736 234 728 236L680 256z" fill="#c2c0de" />
        {/* joining leg */}
        <path d="M674 263L719 283L671 308z" fill="#a9a6ca" />
        <path d="M680 254L730 280L719 284L674 263z" fill="#c6c4e2" />
        <path d="M668 257L673 251L680 253L681 259L674 264z" fill="#d0cee8" />
        {/* front wall */}
        <path fillRule="evenodd" d="M451 224L643 315L677 513L458 386zM498 278L500 370L588 416L573 314z" fill="#a8a5ca" />
        <path d="M451 224L457 221L650 311L643 315z" fill="#c6c4e2" />
        <path d="M498 278L507 283V366L500 370z" fill="#696a80" />
        <path d="M500 370L506 366L586 408L588 416z" fill="#c2c0de" />
        <path d="M643 315Q659 316 672 310L706 508Q693 516 677 513z" fill="url(#bend)" />
        <path d="M672 310L726 286L757 478L706 508z" fill="#696a80" />
        <path d="M726 286L730 282L761 472L757 478z" fill="#85869c" strokeWidth="1" />
        <path d="M643 315Q659 311 671 307L719 281L730 282L726 286L672 311Q658 316 643 315z" fill="#c6c4e2" />
        {/* base flange */}
        <path d="M381 427L453 394L672 525L599 570z" fill="#b9b7df" />
        <path d="M453 394L458 386L678 514L672 525z" fill="url(#fold)" />
        <path d="M381 427L599 570V578L381 433z" fill="#a09fb8" />
        <path d="M599 570L672 525L678 514H684Q683 528 672 533L599 578z" fill="#77788e" />
        <path d="M441 435L448 428L460 426L473 429L515 456L519 462L513 469L500 472L487 470L447 443z" fill="#4b4981" />
        <path d="M441 435L448 428L460 426L473 429L515 456L519 462L514 466L513 460L470 433L450 434L443 440z" fill="#9998b4" />
        <path d="M473 429V434M515 456L514 466" />
        <path d="M565 516L572 506L585 503L599 506L605 516L599 524L585 527L571 524z" fill="#636189" />
        <path d="M565 516L572 506L585 503L599 506L605 516L602 519L597 513L585 511L573 514L568 520z" fill="#85859c" />
        <path d="M572 506V514M599 506V514" />
      </g>
    </svg>
  );
}

function Compass() {
  return (
    <svg viewBox="0 0 62 84" className="absolute top-3 right-[46px] h-[84px] w-[62px]" aria-label="Compass">
      <g fill="#1b4961" stroke="#dcdcff" strokeWidth="1.8">
        <path d="M32 14Q14 28 7 54L31 44zM32 14Q52 28 56 56L31 44z" />
        <path d="M4 66L31 54L56 68Q52 80 30 81Q6 78 4 66z" />
        <path d="M31 64V8" />
      </g>
      <path d="M26 63l4-3h5l2 4-1 5-4 3-6-1z" fill="#cc0a14" />
      <circle cx="32" cy="5" r="3" fill="#ffd9e6" />
      <g fontFamily="Liberation Sans, sans-serif" fontSize="12" fontStyle="italic" fill="#e6dc84">
        <text x="7" y="59">x</text>
        <text x="54" y="60">y</text>
      </g>
      <text x="32" y="9" fontSize="9" fontFamily="Liberation Sans, sans-serif" fill="#fff">z</text>
    </svg>
  );
}

function AxisMark() {
  return (
    <svg viewBox="0 0 36 36" className="absolute right-0.5 bottom-0 size-9" aria-label="Axis">
      <path d="M14 14v12L5 31M14 26l13 5" fill="none" stroke="#fff" strokeWidth="1.2" />
      <g fontFamily="Liberation Sans, sans-serif" fontSize="12" fill="#fff">
        <text x="12" y="12">z</text>
        <text x="0" y="33">x</text>
        <text x="26" y="32">y</text>
      </g>
    </svg>
  );
}

function ScrollArrow({ label, path, className }: { label: string; path: string; className: string }) {
  return (
    <button type="button" aria-label={label} className={`flex shrink-0 items-center justify-center border border-[#4a48a8] bg-[#8a88ee] ${className}`}>
      <svg viewBox="0 0 8 8" className="size-2"><path d={path} fill="#06062c" /></svg>
    </button>
  );
}

function Viewer() {
  return (
    <main className="flex min-w-0 flex-1 flex-col">
      <div className="flex min-h-0 flex-1">
        <div className="flex w-3.5 shrink-0 flex-col border-r border-l-2 border-r-[#35337c] border-l-[#a6a6b6] bg-[#7674fa]">
          <ScrollArrow label="Scroll up" path="M4 1l4 6H0z" className="h-3" />
          <span className="h-3.5 border-b border-[#c8c7ff] bg-[#5553c0]" />
          <ScrollArrow label="Scroll down" path="M4 7l4-6H0z" className="mt-auto h-3" />
        </div>
        <div className="relative min-w-0 flex-1 overflow-hidden bg-linear-to-b from-[#363464] from-0% via-[#464478] via-65% to-[#a5a5b8] to-100%">
          <SpecTree />
          <Bracket />
          <p className="absolute top-[252px] left-[31%] flex items-start whitespace-nowrap text-[#dcdce6] text-shadow-[1px_1px_0_#77778a]">
            <span className="font-['Noto_Sans_CJK_SC',sans-serif] text-[56px] leading-[64px] font-light">莫西网</span>
            <span className="ml-1 font-['Liberation_Serif',serif] text-[53px] leading-[68px]">www.3dmox.com</span>
          </p>
          <Compass />
          <AxisMark />
        </div>
      </div>
      <div className="flex h-3 shrink-0 border-t border-[#b8b7f0] bg-[#7674fa]">
        <span className="w-3.5 bg-[#a6a6b6]" />
        <ScrollArrow label="Scroll left" path="M1 4l6-4v8z" className="w-3" />
        <span className="ml-0.5 w-0.5 bg-[#b8b7ff]" />
        <ScrollArrow label="Scroll right" path="M7 4L1 0v8z" className="ml-auto w-3" />
      </div>
    </main>
  );
}

function SideToolbars() {
  return (
    <aside className="flex w-[77px] shrink-0 border-l-4 border-white bg-[#d0cfe4]">
      <div className="flex w-[34px] flex-col items-center">
        <HDivider className="mt-1 ml-0.5" />
        <Tool name="workbench" label="Workbench" className="mt-2" />
        <HDivider className="mt-[9px] ml-0.5" />
        <Tool name="ghost" label="Insert Body" className="mt-[7px]" />
        <Tool name="ghostLoop" label="Reorder" />
        <Tool name="ghost" label="Isolate" />
        <Tool name="ghost" label="Define Work Object" />
        <HDivider className="mt-[10px] ml-0.5" />
        <Tool name="mirror" label="Mirror" className="mt-[7px]" />
        <Tool name="pattern" label="Pattern" menu />
        <Tool name="translate" label="Translation" menu className="mt-0.5" />
        <HDivider className="mt-[9px] ml-0.5" />
        <Tool name="bend" label="Bend" menu className="mt-[9px]" />
        <Tool name="unfoldBend" label="Unfolding" className="mt-px" />
        <Tool name="foldAll" label="Folding" menu />
        <Tool name="pointMap" label="Point or Curve Mapping" className="mt-0.5" />
      </div>
      <div className="flex flex-1 flex-col items-center border-r-2 border-[#b4b3ca] pl-1">
        <HDivider className="mt-[9px] ml-[3px]" />
        <Tool name="rolled" label="Rolled Wall" className="mt-[7px]" />
        <Tool name="hopper" label="Hopper" className="mt-0.5" />
        <Tool name="swept" label="Swept Flange" />
        <HDivider className="mt-[27px] ml-[3px]" />
        <Tool name="select" label="Select" menu className="mt-[10px]" />
        <HDivider className="mt-14 ml-[3px]" />
        <Tool name="annotation" label="Text with Leader" menu className="mt-[5px]" />
        <Tool name="flag" label="Flag Note" menu className="mt-[3px]" />
        <Tool name="datum" label="Datum" className="mt-1" />
        <HDivider className="mt-2 ml-[3px]" />
        <Tool name="ghostTable" label="View" className="mt-2" />
        <Tool name="dimension" label="Dimension" />
        <HDivider className="mt-[7px] ml-[3px]" />
        <Tool name="intersection" label="Check Overlapping" className="mt-2" />
        <Tool name="dxf" label="Save as DXF" />
        <HDivider className="mt-3 ml-[3px]" />
        <Tool name="point" label="Point" className="mt-2" />
        <Tool name="line" label="Line" />
        <Tool name="yellowPlane" label="Plane" className="mt-0.5" />
      </div>
    </aside>
  );
}

function BottomToolbar() {
  return (
    <div className="flex h-[37px] shrink-0 items-center border-b border-[#5a5a68] bg-linear-to-b from-white via-[#d0cfe4] via-25% to-[#a09fb6] pt-1 pl-1">
      <Divider className="mt-0.5" />
      <Tool name="newDoc" label="New" className="ml-1.5" />
      <Tool name="open" label="Open" />
      <Tool name="save" label="Save" />
      <Tool name="print" label="Quick Print" />
      <Tool name="cut" label="Cut" />
      <Tool name="copy" label="Copy" />
      <Tool name="paste" label="Paste" />
      <Tool name="undo" label="Undo" menu />
      <Tool name="redo" label="Redo" menu className="ml-0.5" />
      <Tool name="whatsThis" label="What's This?" className="ml-0.5" />
      <Divider className="mt-0.5 ml-2.5" />
      <Tool name="formula" label="Formula" className="ml-1.5" />
      <Tool name="comment" label="Comment" />
      <Tool name="ghostLock" label="Check Analysis" className="-mx-0.5" />
      <Tool name="table" label="Design Table" menu />
      <Tool name="relations" label="Knowledge Inspector" />
      <Tool name="lock" label="Lock" menu />
      <Tool name="equivalent" label="Equivalent Dimensions" />
      <Divider className="mt-0.5 ml-3" />
      <Tool name="fly" label="Fly Mode" className="ml-1.5" />
      <Tool name="fitAll" label="Fit All In" />
      <Tool name="pan" label="Pan" />
      <Tool name="rotate" label="Rotate" />
      <Tool name="zoomIn" label="Zoom In" />
      <Tool name="zoomOut" label="Zoom Out" />
      <Tool name="normal" label="Normal View" />
      <Tool name="multiView" label="Create Multi-View" />
      <Tool name="isoView" label="Isometric View" menu />
      <Tool name="shading" label="Shading with Edges" menu className="ml-0.5" />
      <Tool name="hideShow" label="Hide/Show" className="ml-0.5" />
      <Tool name="swapSpace" label="Swap Visible Space" />
      <Divider className="mt-0.5 ml-2.5" />
      <Tool name="catalog" label="Catalog Browser" className="ml-1.5" />
      <Divider className="mt-0.5 ml-2.5" />
      <Tool name="measure" label="Measure Between" className="ml-1.5" />
      <Tool name="caliper" label="Measure Item" />
      <Tool name="inertia" label="Measure Inertia" />
      <Divider className="mt-0.5 ml-2.5" />
      <Tool name="camera" label="Capture" className="ml-1.5" />
      <Divider className="mt-0.5 ml-2.5" />
      <Tool name="material" label="Apply Material" className="ml-1.5" />
      <Tool name="texture" label="Texture" />
      <Tool name="draft" label="Draft Analysis" />
      <Tool name="layers" label="Curvature Analysis" />
      <Divider className="mt-0.5 ml-2.5" />
      <Tool name="update" label="Update All" className="ml-1.5" />
      <Tool name="manual" label="Manual Update" />
      <Tool name="axis" label="Axis System" />
      <span className="self-start font-['Liberation_Sans',sans-serif] text-[14px] leading-3 text-[#9a99ae]">»</span>
      <svg viewBox="0 0 46 36" className="mr-1 -mt-1 ml-auto h-9 w-[46px]" role="img" aria-label="CATIA">
        <path d="M12 2q10-2 11 2-1 3-7 4 5 0 4 3" fill="none" stroke="#cf3f48" strokeWidth="2" />
        <g fontFamily="Liberation Sans, sans-serif" fontStyle="italic">
          <text x="4" y="21" fontSize="17">
            <tspan fill="#45398c">D</tspan><tspan fill="#dd8b2c">S</tspan>
          </text>
          <text x="10" y="33" fontSize="10" fontWeight="bold" fill="#33306c">CATIA</text>
        </g>
      </svg>
    </div>
  );
}

function StatusBar() {
  return (
    <footer className="shrink-0">
      <div className="flex h-[25px] items-center border-b border-[#3c5a44] bg-[#d0cfe4] pl-[3px]">
        <output className="font-[Roboto,sans-serif] text-[12px] text-[#15151c]">Select an object or a command</output>
        <input aria-label="Power input" className="ml-auto h-[19px] w-[299px] bg-white px-1 text-[12px] outline-none" />
        <button type="button" aria-label="Dialog" className="ml-0.5 flex h-[21px] w-[33px] items-center justify-center border-r border-b border-[#6c6c7c] bg-[#c4c3d8]">
          <svg viewBox="0 0 14 12" className="h-3 w-3.5"><path d="M2 2h6v6H2zM10 9h3M13 1v10H3" fill="none" stroke="#9796aa" strokeWidth="1.5" /></svg>
        </button>
        <button type="button" aria-label="Information" className="ml-0.5 flex h-[21px] w-[31px] items-center justify-center border-b border-l border-white border-b-[#6c6c7c] bg-[#c4c3d8]">
          <Icon name="info" className="size-[18px]" />
        </button>
      </div>
      <div className="flex h-[5px] bg-[#8fbf8d]">
        <span className="ml-4 h-full w-6 rounded-t-full bg-[#cfe6f0]" />
        <span className="ml-5 h-full w-[58px] border-x border-[#4d6a50] bg-[#e9f1e6]" />
        <span className="ml-[66px] h-full w-[58px] border-x border-[#4d6a50] bg-[#dfeeda]" />
        <span className="ml-1 h-full w-[58px] border-x border-[#4d6a50] bg-[#dfeeda]" />
        <span className="ml-20 h-full w-8 rounded-t-full bg-[#3f9ccc]" />
        <span className="ml-4 h-full w-[60px] border-x border-[#4d6a50] bg-[#f0f5ee]" />
        <span className="ml-auto h-full w-3 border-l border-[#4d6a50] bg-[#a7cba6]" />
      </div>
    </footer>
  );
}

export default function App() {
  return (
    <div className="flex h-screen min-h-0 flex-col overflow-hidden bg-[#d0cfe4]">
      <TitleBar />
      <MenuBar />
      <TopToolbar />
      <div className="flex min-h-0 flex-1">
        <Viewer />
        <SideToolbars />
      </div>
      <BottomToolbar />
      <StatusBar />
    </div>
  );
}
